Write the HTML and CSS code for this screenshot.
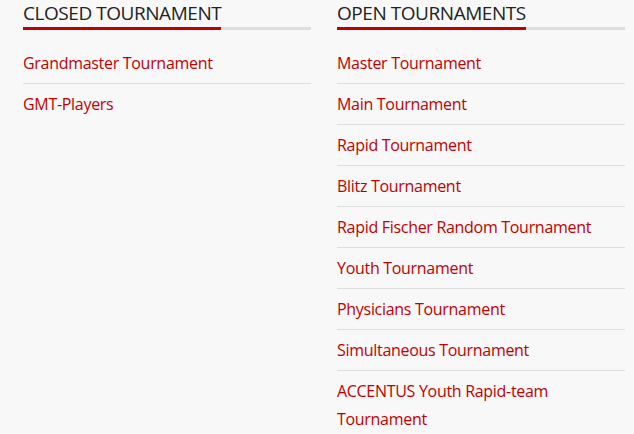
FILE: index.html
```html
<!DOCTYPE html>
<html lang="en">
<head>
<meta charset="utf-8">
<title>Tournaments</title>
<link rel="stylesheet" href="styles.css">
</head>
<body>
<div class="page">
  <section class="col">
    <h2 class="title"><span>CLOSED TOURNAMENT</span></h2>
    <ul class="list">
      <li><a href="#">Grandmaster Tournament</a></li>
      <li><a href="#">GMT-Players</a></li>
    </ul>
  </section>
  <section class="col">
    <h2 class="title"><span>OPEN TOURNAMENTS</span></h2>
    <ul class="list">
      <li><a href="#">Master Tournament</a></li>
      <li><a href="#">Main Tournament</a></li>
      <li><a href="#">Rapid Tournament</a></li>
      <li><a href="#">Blitz Tournament</a></li>
      <li><a href="#">Rapid Fischer Random Tournament</a></li>
      <li><a href="#">Youth Tournament</a></li>
      <li><a href="#">Physicians Tournament</a></li>
      <li><a href="#">Simultaneous Tournament</a></li>
      <li><a href="#">ACCENTUS Youth Rapid-team Tournament</a></li>
    </ul>
  </section>
</div>
</body>
</html>
```
FILE: styles.css
```css
html, body {
  margin: 0;
  padding: 0;
  background: #f8f8f8;
}
body {
  font-family: "Open Sans", "Liberation Sans", sans-serif;
}
.page {
  display: grid;
  grid-template-columns: 288px 288px;
  column-gap: 26px;
  padding: 0 0 0 23px;
}
.title {
  margin: 0 0 13px;
  font-size: 19px;
  font-weight: 400;
  line-height: 27px;
  letter-spacing: -0.45px;
  color: #222;
  border-bottom: 3px solid #dddddd;
}
.title span {
  display: inline-block;
  margin-bottom: -3px;
  border-bottom: 3px solid #c00000;
}
.list {
  list-style: none;
  margin: 0;
  padding: 0;
}
.list li {
  padding: 6px 0;
  border-bottom: 1px solid #dddddd;
  line-height: 28px;
  font-size: 16px;
  letter-spacing: -0.3px;
}
.list li:last-child {
  border-bottom: none;
}
.list a {
  color: #c00000;
  text-decoration: none;
}
```
